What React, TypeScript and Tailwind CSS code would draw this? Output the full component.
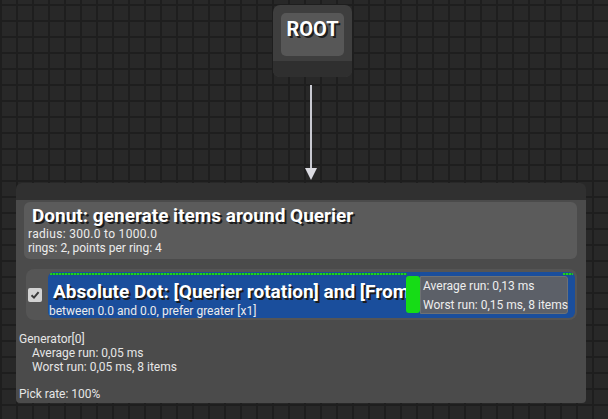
import React from "react";

const titleShadow = "[text-shadow:2px_2px_0_#1c1c1c]";

function RootNode() {
    return (
        <div className="absolute left-[273px] top-[5px] w-[79px] h-[72px] rounded-[7px] bg-[#3e3e3e] flex flex-col overflow-hidden">
            <div className="px-[8px] pt-[8px] pb-[1px]">
                <div className="h-[43px] rounded-[5px] bg-[#575757] flex justify-center pt-[4px]">
                    <span className={`text-[20px] font-bold text-white leading-[24px] ${titleShadow}`}>ROOT</span>
                </div>
            </div>
            <div className="flex-1 mt-[4px] bg-[#2f2f2f]" />
        </div>
    );
}

function Arrow() {
    return (
        <svg className="absolute left-[303px] top-[84px]" width="16" height="97" viewBox="0 0 16 97">
            <line x1="8" y1="1" x2="8" y2="86" stroke="#c9cad2" strokeWidth="2" />
            <polygon points="2,84 14,84 8,96" fill="#dcdce2" />
        </svg>
    );
}

function GeneratorNode() {
    return (
        <div className="absolute left-[16px] top-[183px] w-[570px] h-[220px] flex flex-col">
            <div className="h-[17px] rounded-t-[6px] bg-[#303030]" />
            <div className="flex-1 rounded-b-[4px] bg-[#4b4b4b] flex flex-col">
                {/* generator box */}
                <div className="ml-[8px] mr-[9px] mt-[2px] h-[57px] rounded-[6px] bg-[#5b5b5b] px-[8px] pt-[3px] text-white">
                    <div className={`text-[19px] font-bold leading-[22px] ${titleShadow}`}>Donut: generate items around Querier</div>
                    <div className="-ml-[4px] text-[12px] leading-[14px] text-[#ececec]">
                        <div className="tracking-[0.3px]">radius: 300.0 to 1000.0</div>
                        <div>rings: 2, points per ring: 4</div>
                    </div>
                </div>

                {/* test row */}
                <div className="ml-[10px] mr-[9px] mt-[10px] h-[51px] rounded-[8px] bg-[#555555] flex items-center">
                    <div className="ml-[2px] w-[14px] h-[14px] rounded-[2px] bg-[#d2d2d2] flex items-center justify-center">
                        <svg width="10" height="10" viewBox="0 0 10 10">
                            <path d="M1.5 5.2 L4 7.6 L8.6 2.2" fill="none" stroke="#3a3a3a" strokeWidth="2" />
                        </svg>
                    </div>
                    <div className="relative ml-[6px] w-[527px] h-[46px] rounded-[6px] bg-[#1a4e9c] overflow-hidden">
                        <div className="flex mt-[1px] ml-[2px] h-[2px]">
                            <div className="w-[357px] bg-[repeating-linear-gradient(to_right,#1ed21e_0_2px,#0f8a3a_2px_3px)]" />
                            <div className="flex-1" />
                            <div className="w-[10px] mr-[2px] bg-[repeating-linear-gradient(to_right,#1ed21e_0_2px,#0f8a3a_2px_3px)]" />
                        </div>
                        <div className={`w-[358px] overflow-hidden pl-[5px] pt-[6px] whitespace-nowrap text-[19px] font-bold leading-[22px] text-white ${titleShadow}`}>
                            Absolute Dot: [Querier rotation] and [From Querier to Item]
                        </div>
                        <div className="pl-[1px] pt-[1px] text-[12px] leading-[14px] text-[#ececec] whitespace-nowrap">
                            between 0.0 and 0.0, prefer greater [x1]
                        </div>

                        {/* score overlay */}
                        <div className="absolute left-[358px] top-[4px] flex">
                            <div className="w-[14px] h-[37px] rounded-[3px] bg-[#16dc16]" />
                            <div className="w-[148px] h-[38px] rounded-r-[3px] border border-[#6e7174] bg-[#5c6068] pl-[2px] text-[12px] leading-[19px] text-[#eeeeee] whitespace-nowrap">
                                <div>Average run: 0,13 ms</div>
                                <div>Worst run: 0,15 ms, 8 items</div>
                            </div>
                        </div>
                    </div>
                </div>

                {/* stats */}
                <div className="pl-[3px] pt-[13px] text-[12px] leading-[13.8px] text-[#e6e6e6]">
                    <div>Generator[0]</div>
                    <div className="pl-[13px]">Average run: 0,05 ms</div>
                    <div className="pl-[13px]">Worst run: 0,05 ms, 8 items</div>
                    <div className="h-[13.8px]" />
                    <div>Pick rate: 100%</div>
                </div>
            </div>
        </div>
    );
}

export default function App() {
    return (
        <div className="relative w-[608px] h-[419px] overflow-hidden bg-[#282828] bg-[linear-gradient(to_right,#1e1e1e_2px,transparent_2px),linear-gradient(to_bottom,#1e1e1e_2px,transparent_2px)] bg-[size:16px_16px] bg-[position:0_4px] font-['Roboto',sans-serif]">
            <RootNode />
            <Arrow />
            <GeneratorNode />
        </div>
    );
}
